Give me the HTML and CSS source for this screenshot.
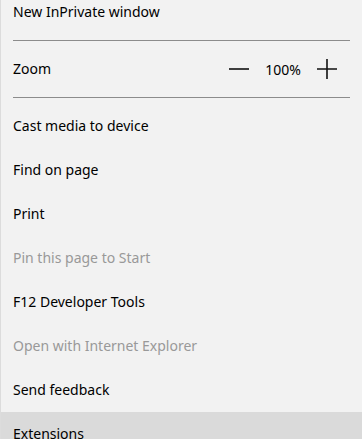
FILE: index.html
```html
<!DOCTYPE html>
<html>
<head>
<meta charset="utf-8">
<link rel="stylesheet" href="styles.css">
</head>
<body>
<div class="menu">
  <div class="item">New InPrivate window</div>
  <div class="sep"></div>
  <div class="item zoom">
    <span>Zoom</span>
    <div class="zoom-ctrl">
      <svg class="ico" width="20" height="20" viewBox="0 0 20 20"><path d="M0 10H20" stroke="#111" stroke-width="1.6"/></svg>
      <span class="pct">100%</span>
      <svg class="ico" width="20" height="20" viewBox="0 0 20 20"><path d="M0 10H20M10 0V20" stroke="#111" stroke-width="1.6"/></svg>
    </div>
  </div>
  <div class="sep"></div>
  <div class="item">Cast media to device</div>
  <div class="item">Find on page</div>
  <div class="item">Print</div>
  <div class="item disabled">Pin this page to Start</div>
  <div class="item">F12 Developer Tools</div>
  <div class="item disabled">Open with Internet Explorer</div>
  <div class="item">Send feedback</div>
  <div class="item active">Extensions</div>
</div>
</body>
</html>
```
FILE: styles.css
```css
html, body {
  margin: 0;
  padding: 0;
  background: #f2f2f2;
  overflow: hidden;
}
.menu {
  margin-top: -10px;
  border-left: 1px solid #dcdcdc;
  background: #f2f2f2;
  font-family: "Noto Sans", "Open Sans", sans-serif;
  font-size: 14px;
  color: #000;
}
.item {
  height: 44px;
  box-sizing: border-box;
  display: flex;
  align-items: center;
  padding: 0 12px 2px;
}
.disabled {
  color: #999;
}
.active {
  background: #dadada;
}
.sep {
  height: 13px;
  display: flex;
  align-items: flex-start;
  padding: 0 12px;
}
.sep::before {
  content: "";
  flex: 1;
  height: 1px;
  margin-top: 6px;
  background: #8c8c8c;
}
.zoom {
  justify-content: space-between;
  padding-right: 25px;
}
.zoom-ctrl {
  display: flex;
  align-items: center;
  gap: 16px;
  margin-top: 2px;
}
.ico {
  display: block;
}
```
